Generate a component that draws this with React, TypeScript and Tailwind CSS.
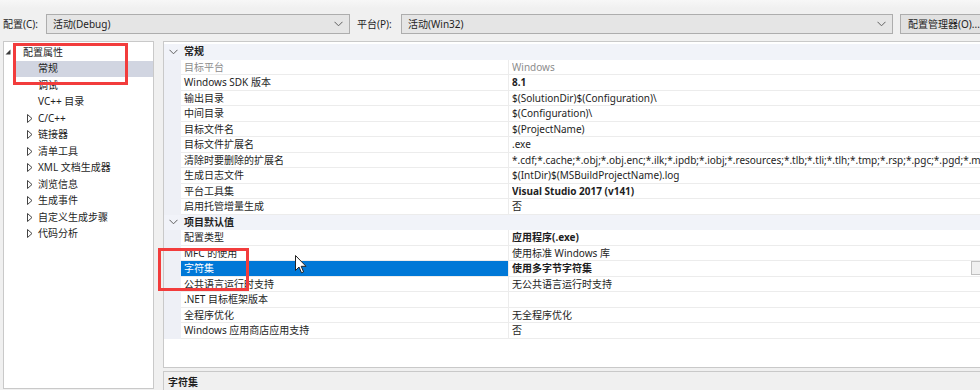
import React from "react";

const FONT = { fontFamily: '"Noto Sans", "Noto Sans CJK SC", sans-serif' };

type Row =
  | { kind: "group"; name: string }
  | { kind: "prop"; name: string; value: string; bold?: boolean; gray?: boolean; selected?: boolean };

const rows: Row[] = [
  { kind: "group", name: "常规" },
  { kind: "prop", name: "目标平台", value: "Windows", gray: true },
  { kind: "prop", name: "Windows SDK 版本", value: "8.1", bold: true },
  { kind: "prop", name: "输出目录", value: "$(SolutionDir)$(Configuration)\\" },
  { kind: "prop", name: "中间目录", value: "$(Configuration)\\" },
  { kind: "prop", name: "目标文件名", value: "$(ProjectName)" },
  { kind: "prop", name: "目标文件扩展名", value: ".exe" },
  {
    kind: "prop",
    name: "清除时要删除的扩展名",
    value:
      "*.cdf;*.cache;*.obj;*.obj.enc;*.ilk;*.ipdb;*.iobj;*.resources;*.tlb;*.tli;*.tlh;*.tmp;*.rsp;*.pgc;*.pgd;*.meta;*.tlog;*.manifest;*.res;*.pch;*.exp;*.idb",
  },
  { kind: "prop", name: "生成日志文件", value: "$(IntDir)$(MSBuildProjectName).log" },
  { kind: "prop", name: "平台工具集", value: "Visual Studio 2017 (v141)", bold: true },
  { kind: "prop", name: "启用托管增量生成", value: "否" },
  { kind: "group", name: "项目默认值" },
  { kind: "prop", name: "配置类型", value: "应用程序(.exe)", bold: true },
  { kind: "prop", name: "MFC 的使用", value: "使用标准 Windows 库" },
  { kind: "prop", name: "字符集", value: "使用多字节字符集", bold: true, selected: true },
  { kind: "prop", name: "公共语言运行时支持", value: "无公共语言运行时支持" },
  { kind: "prop", name: ".NET 目标框架版本", value: "" },
  { kind: "prop", name: "全程序优化", value: "无全程序优化" },
  { kind: "prop", name: "Windows 应用商店应用支持", value: "否" },
];

const tree: { label: string; indent: number; icon: "open" | "closed" | "none"; selected?: boolean }[] = [
  { label: "配置属性", indent: 0, icon: "open" },
  { label: "常规", indent: 1, icon: "none", selected: true },
  { label: "调试", indent: 1, icon: "none" },
  { label: "VC++ 目录", indent: 1, icon: "none" },
  { label: "C/C++", indent: 1, icon: "closed" },
  { label: "链接器", indent: 1, icon: "closed" },
  { label: "清单工具", indent: 1, icon: "closed" },
  { label: "XML 文档生成器", indent: 1, icon: "closed" },
  { label: "浏览信息", indent: 1, icon: "closed" },
  { label: "生成事件", indent: 1, icon: "closed" },
  { label: "自定义生成步骤", indent: 1, icon: "closed" },
  { label: "代码分析", indent: 1, icon: "closed" },
];

function ChevronDown({ className }: { className?: string }) {
  return (
    <svg width="9" height="6" viewBox="0 0 9 6" className={className}>
      <path d="M0.5 0.8 L4.5 4.8 L8.5 0.8" fill="none" stroke="#606060" strokeWidth="1" />
    </svg>
  );
}

function Combo({ text, width }: { text: string; width: string }) {
  return (
    <div
      className={`${width} shrink-0 h-[20px] bg-[#e5e5e5] border border-[#adadad] flex items-center pl-[6px] pr-[6px] text-[#1e1e1e]`}
    >
      <span className="flex-1">{text}</span>
      <ChevronDown />
    </div>
  );
}

export default function App() {
  return (
    <div
      className="w-[980px] h-[390px] bg-[#f0f0f0] overflow-hidden relative text-[10px] text-[#1e1e1e]"
      style={FONT}
    >
      {/* Top bar */}
      <div className="h-[41px] flex items-start pt-[14px] bg-gradient-to-b from-[#f7f7f7] to-[#f0f0f0] to-[20%]">
        <span className="ml-[3px] w-[43px] shrink-0 leading-[20px] whitespace-nowrap">配置(C):</span>
        <Combo text="活动(Debug)" width="w-[304px]" />
        <span className="ml-[7px] w-[44px] shrink-0 leading-[20px] whitespace-nowrap">平台(P):</span>
        <Combo text="活动(Win32)" width="w-[492px]" />
        <div className="ml-[7px] h-[20px] w-[90px] shrink-0 bg-[#e1e1e1] border border-[#adadad] pl-[7px] leading-[18px] whitespace-nowrap">
          配置管理器(O)...
        </div>
      </div>

      {/* Main */}
      <div className="flex items-start">
        {/* Left tree */}
        <div className="ml-[3px] w-[151px] h-[348px] bg-white border border-[#c9c9c9] pt-[2px] shrink-0">
          {tree.map((t) => (
            <div key={t.label} className="h-[16.5px] flex items-center relative">
              {t.selected && <div className="absolute left-[10px] right-0 top-0 bottom-0 bg-[#d1d5e1]" />}
              <div className="relative flex items-center">
                {t.indent === 0 ? (
                  <>
                    <svg width="6" height="6" viewBox="0 0 6 6" className="ml-[1px] mr-[12px]">
                      <path d="M5.5 0.5 L5.5 5.5 L0.5 5.5 Z" fill="#3c3c3c" />
                    </svg>
                    <span className="whitespace-nowrap">{t.label}</span>
                  </>
                ) : (
                  <>
                    <div className="w-[34px] shrink-0 flex pl-[23px]">
                      {t.icon === "closed" && (
                        <svg width="6" height="9" viewBox="0 0 6 9">
                          <path d="M0.5 0.5 L5 4.5 L0.5 8.5 Z" fill="none" stroke="#444" strokeWidth="1" />
                        </svg>
                      )}
                    </div>
                    <span className="whitespace-nowrap">{t.label}</span>
                  </>
                )}
              </div>
            </div>
          ))}
        </div>

        {/* Right column */}
        <div className="ml-[9px] w-[830px] shrink-0 flex flex-col">
          <div className="h-[327px] bg-white border border-[#c9c9c9] pt-[2px] flex flex-col">
            {rows.map((r, i) =>
              r.kind === "group" ? (
                <div key={i} className="h-[15.5px] shrink-0 flex items-center bg-[#f1f3f9] font-bold">
                  <div className="w-[17px] shrink-0 flex justify-center pl-[2px]">
                    <ChevronDown />
                  </div>
                  <span className="pl-[3px] leading-[15.5px]">{r.name}</span>
                </div>
              ) : (
                <div key={i} className="h-[15.5px] shrink-0 flex">
                  <div className="w-[17px] shrink-0 bg-[#eef0f6]" />
                  <div
                    className={`w-[328px] shrink-0 pl-[3px] leading-[15.5px] border-r border-b border-[#ececec] whitespace-nowrap overflow-hidden ${
                      r.selected ? "bg-[#0078d7] text-white border-[#0078d7]" : r.gray ? "text-[#8d8d8d]" : ""
                    }`}
                  >
                    {r.name}
                  </div>
                  <div
                    className={`flex-1 min-w-0 pl-[3px] leading-[15.5px] border-b border-[#ececec] whitespace-nowrap overflow-hidden flex ${
                      r.bold ? "font-bold" : ""
                    } ${r.gray ? "text-[#8d8d8d]" : ""}`}
                  >
                    <span className="flex-1 overflow-hidden">{r.value}</span>
                    {r.selected && (
                      <div className="w-[18px] h-[14px] mr-[3px] bg-[#f0f0f0] border border-[#c0c0c0] shrink-0" />
                    )}
                  </div>
                </div>
              )
            )}
            <div className="flex-1" />
          </div>
          <div className="mt-[3px] h-[30px] border-t border-l border-[#c9c9c9] bg-[#f0f0f0] pl-[4px] pt-[3px] leading-[15px] font-bold">
            字符集
          </div>
        </div>
      </div>

      {/* Red annotation boxes */}
      <div className="absolute left-[13px] top-[43px] w-[115px] h-[42px] border-[3px] border-[#f23c3c]" />
      <div className="absolute left-[158px] top-[248px] w-[91px] h-[43px] border-[3px] border-[#f23c3c]" />

      {/* Mouse cursor */}
      <svg className="absolute left-[295px] top-[255px]" width="12" height="19" viewBox="0 0 12 19">
        <path
          d="M0.5 0.5 L0.5 15.5 L4 12 L6.5 17.8 L8.6 16.9 L6.2 11.3 L11 11.3 Z"
          fill="white"
          stroke="#222"
          strokeWidth="1"
          strokeLinejoin="round"
        />
      </svg>
    </div>
  );
}
